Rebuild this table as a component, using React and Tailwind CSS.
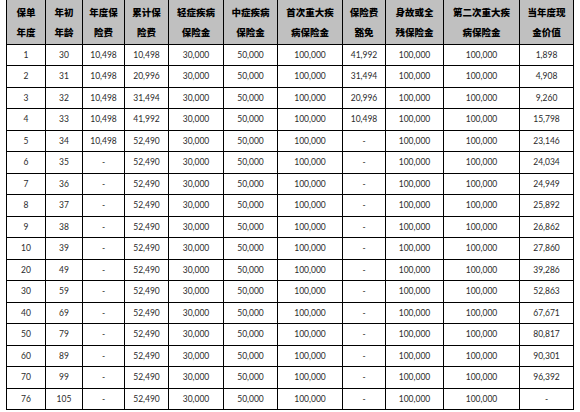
import React from "react";

const cols = [39, 37, 42, 44, 55, 54, 65, 43, 58, 76, 54];

const heads = [
  ["保单", "年度"],
  ["年初", "年龄"],
  ["年度保", "险费"],
  ["累计保", "险费"],
  ["轻症疾病", "保险金"],
  ["中症疾病", "保险金"],
  ["首次重大疾", "病保险金"],
  ["保险费", "豁免"],
  ["身故或全", "残保险金"],
  ["第二次重大疾", "病保险金"],
  ["当年度现", "金价值"],
];

const waiver = ["41,992", "31,494", "20,996", "10,498"];
const cash = {
  1: "1,898", 2: "4,908", 3: "9,260", 4: "15,798", 5: "23,146", 6: "24,034",
  7: "24,949", 8: "25,892", 9: "26,862", 10: "27,860", 20: "39,286",
  30: "52,863", 40: "67,671", 50: "80,817", 60: "90,301", 70: "96,392", 76: "-",
};
const cum = ["10,498", "20,996", "31,494", "41,992"];

const years = [1, 2, 3, 4, 5, 6, 7, 8, 9, 10, 20, 30, 40, 50, 60, 70, 76];

const rows = years.map((y) => [
  String(y),
  String(y + 29),
  y <= 5 ? "10,498" : "-",
  y <= 4 ? cum[y - 1] : "52,490",
  "30,000",
  "50,000",
  "100,000",
  y <= 4 ? waiver[y - 1] : "-",
  "100,000",
  "100,000",
  cash[y],
]);

export default function App() {
  return (
    <div className="w-[580px] h-[412px] bg-white pl-[6px] overflow-hidden">
      <table
        className="table-fixed border-collapse w-[567px] text-[#2b2b2b]"
        style={{ fontFamily: "Lato, 'Noto Sans CJK SC', sans-serif" }}
      >
        <colgroup>
          {cols.map((w, i) => (
            <col key={i} style={{ width: w }} />
          ))}
        </colgroup>
        <thead>
          <tr className="h-[44px] bg-[#c0c0c0]">
            {heads.map((h, i) => (
              <th
                key={i}
                className="border-x border-b border-black p-0 text-center align-middle font-black text-[9.5px] leading-[20px] text-black"
                style={{ fontFamily: "'Noto Sans CJK SC', sans-serif" }}
              >
                <div className="whitespace-nowrap">{h[0]}</div>
                <div className="whitespace-nowrap">{h[1]}</div>
              </th>
            ))}
          </tr>
        </thead>
        <tbody>
          {rows.map((r, ri) => (
            <tr key={ri} className="h-[21.5px]">
              {r.map((c, ci) => (
                <td
                  key={ci}
                  className="border border-black p-0 text-center align-middle text-[8.5px] leading-none"
                >
                  {c}
                </td>
              ))}
            </tr>
          ))}
        </tbody>
      </table>
    </div>
  );
}
